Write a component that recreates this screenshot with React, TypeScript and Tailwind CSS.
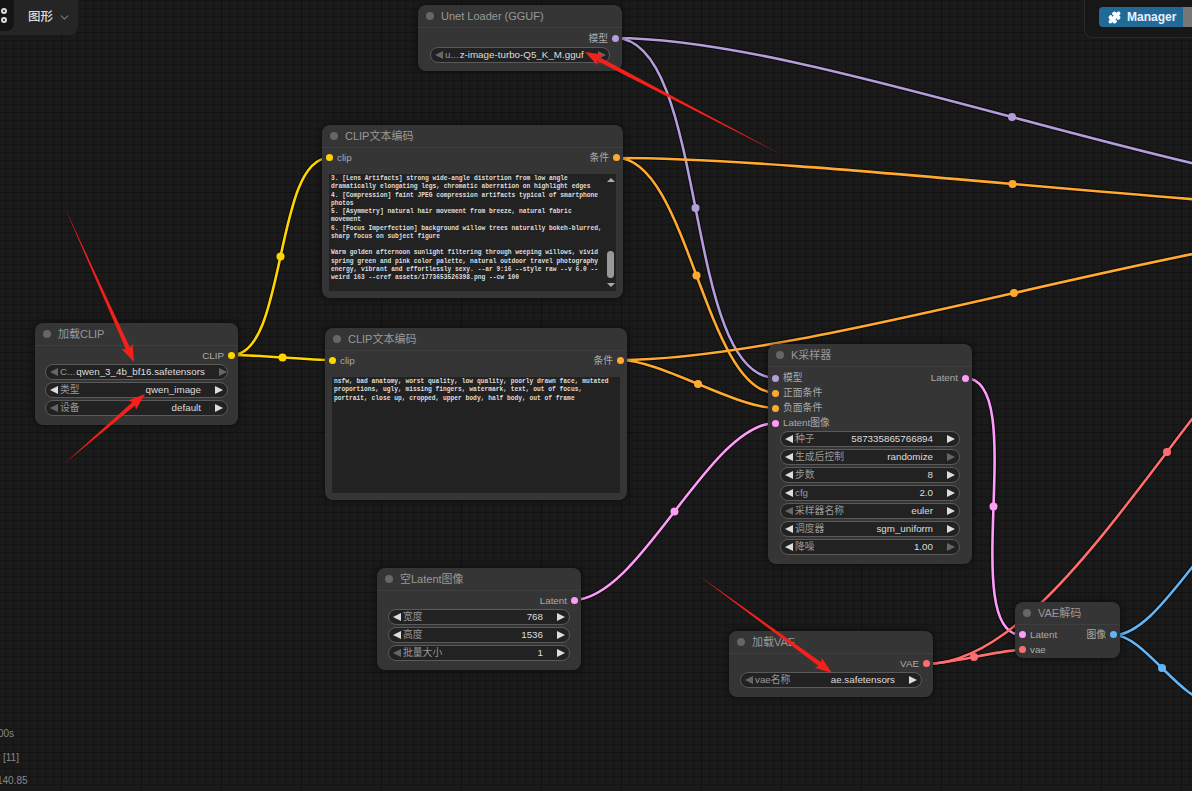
import { FC, ReactNode } from 'react';

import { ChevronDown, Puzzle } from 'lucide-react';

const YELLOW = '#ffd500';
const ORANGE = '#ffa931';
const PURPLE = '#b39ddb';
const PINK = '#ff9cf9';
const RED = '#ff6e6e';
const BLUE = '#64b5f6';

// [x1, y1, x2, y2, colour, show midpoint]
const wires: [number, number, number, number, string, boolean][] = [
  [615, 38, 776, 378, PURPLE, true],
  [615, 38, 1409, 196, PURPLE, true],
  [617, 158, 776, 393, ORANGE, true],
  [617, 158, 1408, 210, ORANGE, true],
  [620, 360, 776, 408, ORANGE, true],
  [620, 360, 1408, 226, ORANGE, true],
  [232, 355, 329, 158, YELLOW, true],
  [232, 355, 333, 360, YELLOW, true],
  [965, 378, 1022, 635, PINK, true],
  [573, 600, 776, 423, PINK, true],
  [926, 664, 1022, 650, RED, true],
  [926, 664, 1408, 240, RED, true],
  [1114, 635, 1262, 510, BLUE, false],
  [1114, 635, 1210, 701, BLUE, true],
];

const wirePath = (x1: number, y1: number, x2: number, y2: number) => {
  const d = Math.hypot(x2 - x1, y2 - y1) * 0.25;
  return `M${x1} ${y1}C${x1 + d} ${y1} ${x2 - d} ${y2} ${x2} ${y2}`;
};

const Wires: FC = () => (
  <svg className="absolute inset-0" width="1192" height="791">
    {wires.map(([x1, y1, x2, y2], i) => (
      <path key={i} d={wirePath(x1, y1, x2, y2)} fill="none" stroke="#000" strokeWidth="4.5" opacity="0.6" />
    ))}
    {wires.map(([x1, y1, x2, y2, c, mid], i) => (
      <g key={i}>
        <path d={wirePath(x1, y1, x2, y2)} fill="none" stroke={c} strokeWidth="2.6" />
        {mid && <circle cx={(x1 + x2) / 2} cy={(y1 + y2) / 2} r="4" fill={c} />}
      </g>
    ))}
  </svg>
);

// tail, tip
const arrows = [
  [65, 208, 134, 362],
  [65, 463, 145, 394],
  [782, 155, 585, 52],
  [698, 575, 832, 673],
];

const arrowPoints = (x1: number, y1: number, x2: number, y2: number) => {
  const len = Math.hypot(x2 - x1, y2 - y1);
  const ux = (x2 - x1) / len;
  const uy = (y2 - y1) / len;
  const bx = x2 - ux * 15;
  const by = y2 - uy * 15;
  const side = (w: number, back = 0) => `${bx + uy * w - ux * back},${by - ux * w - uy * back}`;
  return [`${x1},${y1}`, side(2.2), side(6, 2), `${x2},${y2}`, side(-6, 2), side(-2.2)].join(' ');
};

const Arrows: FC = () => (
  <svg className="absolute inset-0" width="1192" height="791">
    {arrows.map(([x1, y1, x2, y2], i) => (
      <polygon key={i} fill="#f5201a" points={arrowPoints(x1, y1, x2, y2)} />
    ))}
  </svg>
);

const Dot: FC<{ color: string }> = ({ color }) => (
  <span className={`h-[7px] w-[7px] shrink-0 rounded-full ${color}`} />
);

const Tri: FC<{ left?: boolean; off?: boolean }> = ({ left, off }) => (
  <span
    className={`h-0 w-0 shrink-0 border-y-[4.5px] border-y-transparent ${
      left ? 'border-r-[8px]' : 'border-l-[8px]'
    } ${off ? (left ? 'border-r-[#666]' : 'border-l-[#666]') : left ? 'border-r-[#ddd]' : 'border-l-[#ddd]'}`}
  />
);

const Widget: FC<{
  label: string;
  value: string;
  leftOff?: boolean;
  rightOff?: boolean;
}> = ({ label, value, leftOff, rightOff }) => (
  <div className="flex h-4 items-center rounded-full border border-[#5a5a5a] bg-[#222] px-[4px] text-[9.8px] leading-none">
    <Tri left off={leftOff} />
    <span className="ml-[2px] shrink-0 text-[#999]">{label}</span>
    <span className="mr-[14px] ml-auto whitespace-nowrap pl-px text-[#ddd]">{value}</span>
    <Tri off={rightOff} />
  </div>
);

const Node: FC<{ title: string; className: string; children: ReactNode }> = ({
  title,
  className,
  children,
}) => (
  <div className={`absolute flex flex-col rounded-lg bg-[#353535] shadow-[0_0_6px_rgba(0,0,0,0.6)] ${className}`}>
    <div className="flex h-[23px] shrink-0 items-center gap-[7px] border-b border-[#3f3f3f] pl-2 text-[11px] leading-none text-[#999]">
      <span className="h-2 w-2 rounded-full bg-[#666]" />
      <span className="whitespace-nowrap">{title}</span>
    </div>
    {children}
  </div>
);

const Slot: FC<{ label?: string; out?: string; color?: string; outColor?: string }> = ({
  label,
  out,
  color,
  outColor,
}) => (
  <div className="flex h-[15px] shrink-0 items-center px-[3.5px] text-[9.8px] leading-none text-[#aaa]">
    {label && color && (
      <>
        <Dot color={color} />
        <span className="ml-[4.5px]">{label}</span>
      </>
    )}
    {out && outColor && (
      <>
        <span className="mr-[3.5px] ml-auto">{out}</span>
        <Dot color={outColor} />
      </>
    )}
  </div>
);

const Prompt: FC<{ children: ReactNode; className: string }> = ({ children, className }) => (
  <div
    className={`mx-[7px] mt-[9px] overflow-hidden whitespace-pre-wrap bg-[#222] pt-[1px] pl-[2px] font-['Liberation_Mono',monospace] text-[6.27px] leading-[8.25px] font-bold text-[#ddd] ${className}`}
  >
    {children}
  </div>
);

const App: FC = () => (
  <div className="relative h-[791px] w-[1192px] overflow-hidden bg-[#1a1a1a] bg-[linear-gradient(90deg,#111_1px,transparent_1px),linear-gradient(#111_1px,transparent_1px),linear-gradient(90deg,#151515_1px,transparent_1px),linear-gradient(#151515_1px,transparent_1px)] bg-[length:80px_80px,80px_80px,8px_8px,8px_8px] bg-[position:61px_0,0_32px,5px_0,0_0] font-['Liberation_Sans','Noto_Sans_CJK_SC',sans-serif]">
    <Wires />

    {/* top left menu */}
    <div className="absolute top-0 left-0 flex h-[35px] w-[78px] items-center rounded-br-lg bg-[#252525]">
      <div className="flex h-[31px] w-[14px] flex-col items-center justify-center gap-[3px] self-start rounded-br-lg bg-[#141414]">
        <span className="ml-[-7px] h-[6px] w-[6px] rounded-full border-2 border-[#ddd]" />
        <span className="ml-[-7px] h-[6px] w-[6px] rounded-full border-2 border-[#ddd]" />
      </div>
      <span className="ml-[14px] text-[12.5px] font-medium text-[#ddd]">图形</span>
      <ChevronDown className="ml-[5px] h-[13px] w-[13px] text-[#777]" />
    </div>

    {/* manager */}
    <div className="absolute top-[-2px] left-[1084px] flex h-[40px] w-[120px] items-start rounded-bl-lg border border-[#2a2a2a] bg-[#171717] pt-[8px] pl-[14px]">
      <div className="flex h-[20px] w-[84px] shrink-0 items-center gap-[6px] rounded-l bg-[#1f6a96] pl-[9px] text-[12px] font-bold text-[#eef]">
        <Puzzle className="h-[13px] w-[13px] fill-white text-white" />
        <span>Manager</span>
      </div>
      <div className="h-[20px] w-[20px] shrink-0 bg-[#777]" />
    </div>

    <Node title="Unet Loader (GGUF)" className="top-[5px] left-[418px] h-[66px] w-[204px]">
      <div className="mt-[3px]">
        <Slot out="模型" outColor="bg-[#b39ddb]" />
      </div>
      <div className="mx-[12px] mt-px">
        <Widget label="u..." value="z-image-turbo-Q5_K_M.gguf" leftOff rightOff />
      </div>
    </Node>

    <Node title="CLIP文本编码" className="top-[125px] left-[322px] h-[173px] w-[301px]">
      <div className="mt-[2px]">
        <Slot label="clip" color="bg-[#ffd500]" out="条件" outColor="bg-[#ffa931]" />
      </div>
      <div className="relative">
        <Prompt className="h-[117px] pr-[12px]">
          {`3. [Lens Artifacts] strong wide-angle distortion from low angle dramatically elongating legs, chromatic aberration on highlight edges
4. [Compression] faint JPEG compression artifacts typical of smartphone photos
5. [Asymmetry] natural hair movement from breeze, natural fabric movement
6. [Focus Imperfection] background willow trees naturally bokeh-blurred, sharp focus on subject figure

Warm golden afternoon sunlight filtering through weeping willows, vivid spring green and pink color palette, natural outdoor travel photography energy, vibrant and effortlessly sexy. --ar 9:16 --style raw --v 6.0 --weird 163 --cref assets/1773653526398.png --cw 100`}
        </Prompt>
        <div className="absolute top-[9px] right-[7px] flex h-[117px] w-[11px] flex-col items-center justify-between py-[4px]">
          <span className="h-0 w-0 border-x-[4px] border-b-[4px] border-x-transparent border-b-[#aaa]" />
          <span className="mt-auto mb-[5px] h-[27px] w-[7px] rounded-full bg-[#999]" />
          <span className="h-0 w-0 border-x-[4px] border-t-[4px] border-x-transparent border-t-[#aaa]" />
        </div>
      </div>
    </Node>

    <Node title="CLIP文本编码" className="top-[328px] left-[325px] h-[172px] w-[302px]">
      <div className="mt-[2px]">
        <Slot label="clip" color="bg-[#ffd500]" out="条件" outColor="bg-[#ffa931]" />
      </div>
      <Prompt className="h-[116px] pr-[2px]">
        nsfw, bad anatomy, worst quality, low quality, poorly drawn face, mutated proportions, ugly, missing fingers, watermark, text, out of focus, portrait, close up, cropped, upper body, half body, out of frame
      </Prompt>
    </Node>

    <Node title="加载CLIP" className="top-[323px] left-[35px] h-[102px] w-[203px]">
      <div className="mt-[2px]">
        <Slot out="CLIP" outColor="bg-[#ffd500]" />
      </div>
      <div className="mx-[10px] mt-px flex flex-col gap-[2px]">
        <Widget label="C..." value="qwen_3_4b_bf16.safetensors" leftOff rightOff />
        <Widget label="类型" value="qwen_image" />
        <Widget label="设备" value="default" leftOff />
      </div>
    </Node>

    <Node title="空Latent图像" className="top-[568px] left-[377px] h-[102px] w-[204px]">
      <div className="mt-[2px]">
        <Slot out="Latent" outColor="bg-[#ff9cf9]" />
      </div>
      <div className="mx-[11px] mt-px flex flex-col gap-[2px]">
        <Widget label="宽度" value="768" />
        <Widget label="高度" value="1536" />
        <Widget label="批量大小" value="1" leftOff />
      </div>
    </Node>

    <Node title="K采样器" className="top-[344px] left-[768px] h-[220px] w-[204px]">
      <div className="mt-[3.5px]">
        <Slot label="模型" color="bg-[#b39ddb]" out="Latent" outColor="bg-[#ff9cf9]" />
        <Slot label="正面条件" color="bg-[#ffa931]" />
        <Slot label="负面条件" color="bg-[#ffa931]" />
        <Slot label="Latent图像" color="bg-[#ff9cf9]" />
      </div>
      <div className="mx-[12px] mt-[0.5px] flex flex-col gap-[2px]">
        <Widget label="种子" value="587335865766894" />
        <Widget label="生成后控制" value="randomize" rightOff />
        <Widget label="步数" value="8" />
        <Widget label="cfg" value="2.0" />
        <Widget label="采样器名称" value="euler" leftOff />
        <Widget label="调度器" value="sgm_uniform" />
        <Widget label="降噪" value="1.00" rightOff />
      </div>
    </Node>

    <Node title="VAE解码" className="top-[602px] left-[1015px] h-[56px] w-[105px]">
      <div className="mt-[2px]">
        <Slot label="Latent" color="bg-[#ff9cf9]" out="图像" outColor="bg-[#64b5f6]" />
        <Slot label="vae" color="bg-[#ff6e6e]" />
      </div>
    </Node>

    <Node title="加载VAE" className="top-[631px] left-[729px] h-[66px] w-[204px]">
      <div className="mt-[2px]">
        <Slot out="VAE" outColor="bg-[#ff6e6e]" />
      </div>
      <div className="mx-[11px] mt-px">
        <Widget label="vae名称" value="ae.safetensors" leftOff />
      </div>
    </Node>

    {/* monitor text cut by the crop */}
    <span className="absolute top-[726px] left-[-2px] text-[10px] text-[#888]">00s</span>
    <span className="absolute top-[750px] left-[3px] text-[10px] text-[#888]">[11]</span>
    <span className="absolute top-[773px] left-[-3px] text-[10px] text-[#888]">140.85</span>

    <Arrows />
  </div>
);

export default App;
